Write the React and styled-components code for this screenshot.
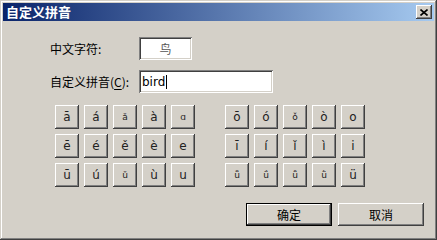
import React from "react";
import styled, { createGlobalStyle } from "styled-components";

const Global = createGlobalStyle`
  html, body { margin: 0; padding: 0; background: #d4d0c8; }
  body { font-family: "Noto Sans CJK SC", "DejaVu Sans", sans-serif; }
`;

const raised = `
  box-shadow: inset -1px -1px #404040, inset 1px 1px #ffffff,
    inset -2px -2px #808080, inset 2px 2px #d4d0c8;
`;
const sunken = `
  box-shadow: inset 1px 1px #808080, inset -1px -1px #ffffff,
    inset 2px 2px #404040, inset -2px -2px #d4d0c8;
`;

const Window = styled.div`
  width: 437px;
  height: 240px;
  box-sizing: border-box;
  padding: 3px;
  background: #d4d0c8;
  display: flex;
  flex-direction: column;
  box-shadow: inset -1px -1px #404040, inset 1px 1px #d4d0c8,
    inset -2px -2px #808080, inset 2px 2px #ffffff;
`;

const TitleBar = styled.div`
  height: 18px;
  flex: none;
  background: linear-gradient(90deg, #0a246a 0%, #a6caf0 100%);
  display: flex;
  align-items: center;
  justify-content: space-between;
  padding: 0 2px 0 3px;
`;

const Title = styled.span`
  color: #ffffff;
  font-weight: bold;
  font-size: 13px;
  line-height: 18px;
`;

const CloseBtn = styled.div`
  width: 16px;
  height: 14px;
  background: #d4d0c8;
  ${raised}
  display: flex;
  align-items: center;
  justify-content: center;
`;

const Body = styled.div`
  flex: 1;
  display: flex;
  flex-direction: column;
  padding: 16px 10px 0 47px;
`;

const Form = styled.div`
  display: grid;
  grid-template-columns: 89px auto;
  row-gap: 10px;
  align-items: center;
`;

const Label = styled.span`
  font-size: 12px;
  color: #000;
  line-height: 23px;
`;

const Under = styled.span`
  text-decoration: underline;
  text-underline-offset: 2px;
`;

const Field = styled.div`
  height: 23px;
  width: ${(p) => p.$w}px;
  box-sizing: border-box;
  background: #ffffff;
  ${sunken}
  display: flex;
  align-items: center;
  justify-content: ${(p) => (p.$center ? "center" : "flex-start")};
  padding: 0 3px;
  font-size: 12px;
  color: ${(p) => (p.$dim ? "#555" : "#000")};
  font-family: ${(p) =>
    p.$latin ? '"DejaVu Sans", "Noto Sans", sans-serif' : '"Noto Sans CJK SC", sans-serif'};
`;

const Caret = styled.span`
  display: inline-block;
  width: 1px;
  height: 14px;
  background: #000;
  margin-left: 1px;
`;

const Pads = styled.div`
  display: flex;
  gap: 30px;
  margin: 12px 0 0 5px;
`;

const PadGrid = styled.div`
  display: grid;
  grid-template-columns: repeat(5, 24px);
  grid-auto-rows: 24px;
  gap: 5px;
`;

const Key = styled.div`
  background: #d4d0c8;
  ${raised}
  display: flex;
  align-items: center;
  justify-content: center;
  font-family: "DejaVu Sans", sans-serif;
  font-size: ${(p) => (p.$small ? 9 : 12)}px;
  color: #222;
  padding-bottom: 1px;
  box-sizing: border-box;
`;

const Footer = styled.div`
  display: flex;
  justify-content: flex-end;
  gap: 6px;
  margin-top: 16px;
`;

const Btn = styled.div`
  width: 86px;
  height: 23px;
  box-sizing: border-box;
  background: #d4d0c8;
  display: flex;
  align-items: center;
  justify-content: center;
  font-size: 12px;
  color: #000;
  ${(p) =>
    p.$default
      ? `box-shadow: inset 0 0 0 1px #000, inset -2px -2px #404040, inset 2px 2px #ffffff,
    inset -3px -3px #808080, inset 3px 3px #d4d0c8;`
      : raised}
`;

const left = [
  ["ā", "á", "ǎ", "à", "ɑ"],
  ["ē", "é", "ě", "è", "e"],
  ["ū", "ú", "ǔ", "ù", "u"],
];
const right = [
  ["ō", "ó", "ǒ", "ò", "o"],
  ["ī", "í", "ǐ", "ì", "i"],
  ["ǖ", "ǘ", "ǚ", "ǜ", "ü"],
];
const small = new Set(["ǎ", "ɑ", "ǔ", "ǒ", "ǖ", "ǘ", "ǚ", "ǜ"]);

export default function App() {
  return (
    <>
      <Global />
      <Window>
        <TitleBar>
          <Title>自定义拼音</Title>
          <CloseBtn>
            <svg width="8" height="7" viewBox="0 0 8 7">
              <path d="M0.5 0.5 L7.5 6.5 M7.5 0.5 L0.5 6.5" stroke="#000" strokeWidth="1.6" />
            </svg>
          </CloseBtn>
        </TitleBar>
        <Body>
          <Form>
            <Label>中文字符:</Label>
            <Field $w={53} $center $dim>
              鸟
            </Field>
            <Label>
              自定义拼音(<Under>C</Under>):
            </Label>
            <Field $w={134} $latin>
              bird
              <Caret />
            </Field>
          </Form>
          <Pads>
            {[left, right].map((g, gi) => (
              <PadGrid key={gi}>
                {g.flat().map((c, i) => (
                  <Key key={i} $small={small.has(c)}>
                    {c}
                  </Key>
                ))}
              </PadGrid>
            ))}
          </Pads>
          <Footer>
            <Btn $default>确定</Btn>
            <Btn>取消</Btn>
          </Footer>
        </Body>
      </Window>
    </>
  );
}
